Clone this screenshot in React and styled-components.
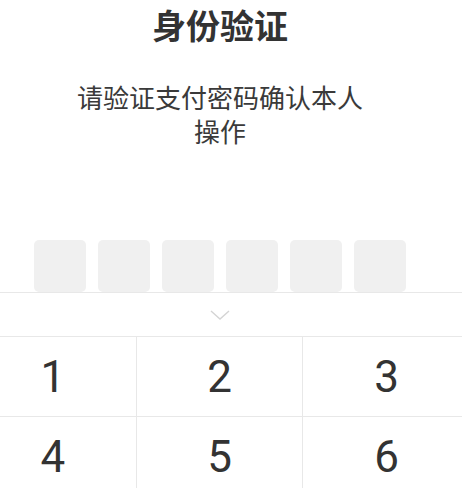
import styled, { createGlobalStyle } from "styled-components";

const GlobalStyle = createGlobalStyle`
  html, body {
    margin: 0;
    padding: 0;
    background: #fff;
    overflow: hidden;
  }
`;

const Page = styled.div`
  width: 500px;
  margin-left: -30px;
  font-family: Roboto, "Noto Sans CJK SC", sans-serif;
  color: #333;
`;

const Title = styled.h1`
  margin: 0;
  padding-top: 8px;
  font-family: "Noto Sans CJK SC", sans-serif;
  font-size: 34px;
  line-height: 34px;
  font-weight: 700;
  text-align: center;
  color: #333;
`;

const Subtitle = styled.p`
  margin: 38px auto 0;
  width: 300px;
  font-family: "Noto Sans CJK SC", sans-serif;
  font-size: 26px;
  line-height: 34px;
  font-weight: 400;
  text-align: center;
  color: #3a3a3a;
`;

const CodeRow = styled.div`
  display: flex;
  justify-content: center;
  gap: 12px;
  margin-top: 92px;
`;

const CodeBox = styled.div`
  width: 52px;
  height: 52px;
  border-radius: 5px;
  background: #f0f0f0;
`;

const Keyboard = styled.div`
  border-top: 1px solid #e8e8e8;
`;

const Collapse = styled.div`
  height: 43px;
  display: flex;
  align-items: center;
  justify-content: center;
  border-bottom: 1px solid #e8e8e8;
`;

const Keys = styled.div`
  display: grid;
  grid-template-columns: repeat(3, 1fr);
`;

const Key = styled.button`
  height: 80px;
  border: 0;
  border-bottom: 1px solid #e8e8e8;
  border-right: ${(p) => (p.$last ? "0" : "1px solid #e8e8e8")};
  background: #fff;
  font-family: Roboto, sans-serif;
  font-size: 44px;
  font-weight: 400;
  color: #333;
  padding: 0;
  cursor: pointer;
`;

const digits = ["1", "2", "3", "4", "5", "6", "7", "8", "9"];

export default function App() {
  return (
    <Page>
      <GlobalStyle />
      <Title>身份验证</Title>
      <Subtitle>请验证支付密码确认本人操作</Subtitle>
      <CodeRow>
        {Array.from({ length: 6 }).map((_, i) => (
          <CodeBox key={i} />
        ))}
      </CodeRow>
      <Keyboard>
        <Collapse>
          <svg width="20" height="10" viewBox="0 0 20 10">
            <path d="M1 1 L10 9 L19 1" fill="none" stroke="#d4d4d4" strokeWidth="1.4" />
          </svg>
        </Collapse>
        <Keys>
          {digits.map((d, i) => (
            <Key key={d} $last={i % 3 === 2}>
              {d}
            </Key>
          ))}
        </Keys>
      </Keyboard>
    </Page>
  );
}
